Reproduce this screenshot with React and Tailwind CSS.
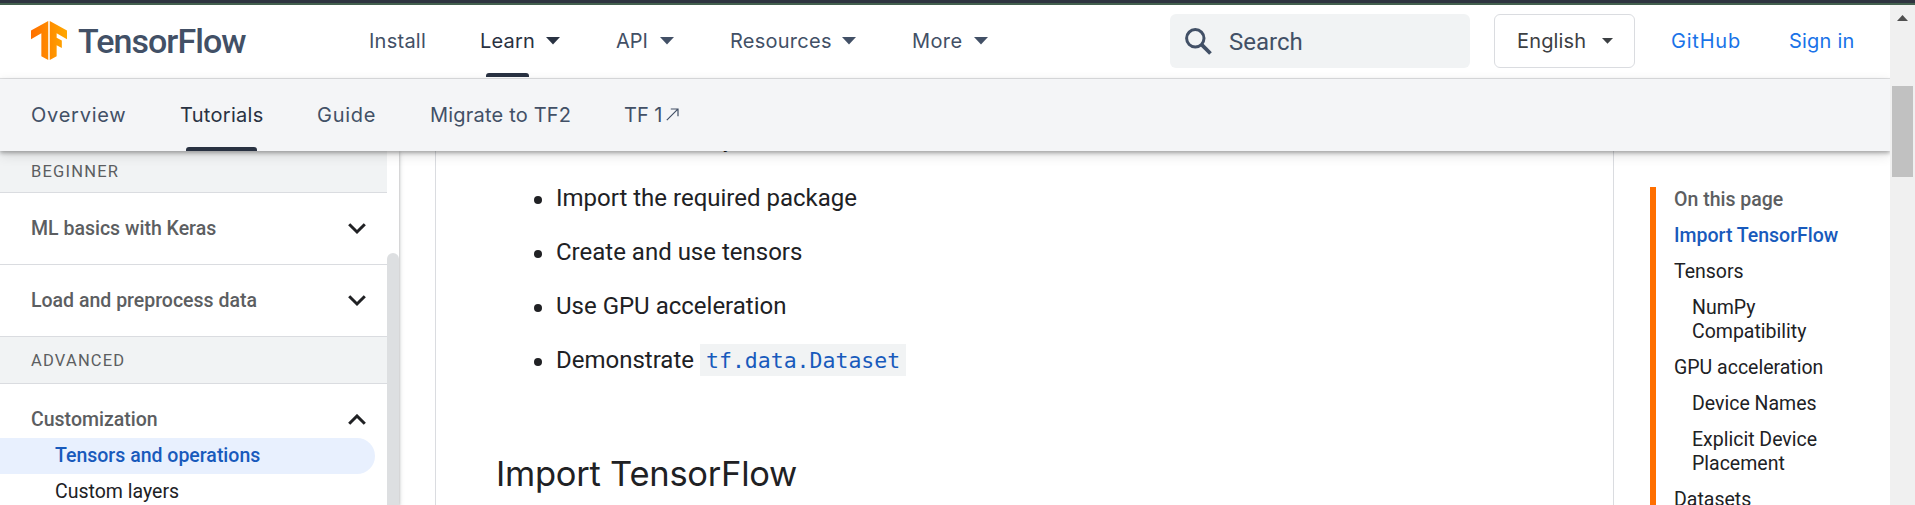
const gs = "font-['Inter',sans-serif]";

function Caret({ className = '' }) {
  return (
    <svg viewBox="0 0 14 8" className={`h-2 w-3.5 shrink-0 ${className}`} fill="currentColor">
      <path d="M0 0h14L7 7.5z" />
    </svg>
  );
}

function Chevron({ up }) {
  return (
    <svg viewBox="0 0 18 12" className="mr-[21px] h-3 w-[18px] shrink-0 text-[#202124]" fill="none" stroke="currentColor" strokeWidth="3">
      <path d={up ? 'M1.2 9.8 9 2l7.8 7.8' : 'M1.2 1.2 9 9l7.8-7.8'} />
    </svg>
  );
}

function Logo() {
  return (
    <div className="ml-[31px] flex w-[338px] shrink-0 items-center pb-1">
      <svg viewBox="1.28 0 21.44 24" preserveAspectRatio="none" className="mt-px h-[39px] w-9 shrink-0">
        <defs>
          <linearGradient id="tf" x1="0" x2="1" y1="0" y2="0">
            <stop offset="0" stopColor="#ff6f00" />
            <stop offset="1" stopColor="#ffa800" />
          </linearGradient>
        </defs>
        <path
          fill="url(#tf)"
          d="M1.292 5.856L11.54 0v24l-4.095-2.378V7.603l-6.168 3.564.015-5.31zm21.43 5.311l-.014-5.31L12.46 0v24l4.095-2.378V14.87l3.092 1.788-.018-4.618-3.074-1.756V7.603l6.168 3.564z"
        />
      </svg>
      <span className="ml-[11px] mt-[3px] font-['Roboto',sans-serif] text-[34px] font-medium leading-none tracking-[-0.95px] text-[#425066]">
        TensorFlow
      </span>
    </div>
  );
}

function TopBar() {
  return (
    <header className={`flex h-[74px] items-stretch border-b border-[#e3e4e6] bg-white text-[20px] text-[#425066] ${gs}`}>
      <Logo />
      <nav className="flex shrink-0">
        <a className="flex w-[111px] items-center pb-px tracking-[0.25px]">Install</a>
        <a className="relative flex w-[136px] items-center pb-px text-[#293242]">
          <span className="w-[66px] tracking-[0.2px]">Learn</span>
          <Caret />
          <span className="absolute bottom-px left-[6px] h-1 w-[43px] rounded-t-[3px] bg-[#293242]" />
        </a>
        <a className="flex w-[114px] items-center pb-px">
          <span className="w-[44px]">API</span>
          <Caret />
        </a>
        <a className="flex w-[182px] items-center pb-px">
          <span className="w-[112px] tracking-[0.25px]">Resources</span>
          <Caret />
        </a>
        <a className="flex w-[258px] items-center pb-px">
          <span className="w-[62px] tracking-[0.4px]">More</span>
          <Caret />
        </a>
      </nav>
      <div className="mt-[9px] flex h-[54px] w-[300px] shrink-0 items-center rounded-md bg-[#f1f3f4] font-['Roboto',sans-serif] text-[24px]">
        <svg viewBox="0 0 27 27" className="ml-[15px] h-[27px] w-[27px]" fill="none" stroke="currentColor">
          <circle cx="10.3" cy="10.3" r="8.7" strokeWidth="3" />
          <path d="M16.4 16.4 25.5 25.5" strokeWidth="3.8" />
        </svg>
        <span className="ml-[17px] pt-px">Search</span>
      </div>
      <div className="ml-6 mt-[9px] flex h-[54px] w-[141px] shrink-0 items-center rounded-md border border-[#dadce0] text-[#3c4043]">
        <span className="ml-[22px] w-[85px] pb-px tracking-[0.15px]">English</span>
        <svg viewBox="0 0 12 6" className="h-1.5 w-3" fill="currentColor"><path d="M0 0h11L5.5 5.8z" /></svg>
      </div>
      <a className="ml-[36px] flex w-[118px] shrink-0 items-center pb-px tracking-[0.8px] text-[#1a73e8]">GitHub</a>
      <a className="flex shrink-0 items-center pb-px tracking-[0.2px] text-[#1a73e8]">Sign in</a>
    </header>
  );
}

function TabBar() {
  return (
    <nav className={`relative z-10 flex h-[72px] bg-[#f4f5f7] pl-[31px] text-[20px] text-[#425066] shadow-[0_2px_4px_rgba(0,0,0,0.3),0_4px_12px_rgba(0,0,0,0.12)] ${gs}`}>
      <a className="flex w-[149px] items-center pb-px tracking-[0.75px]">Overview</a>
      <a className="relative flex w-[137px] items-center pb-px tracking-[0.3px] text-[#293242]">
        Tutorials
        <span className="absolute bottom-0 left-[6px] h-1 w-[71px] rounded-t-[3px] bg-[#293242]" />
      </a>
      <a className="flex w-[113px] items-center pb-px tracking-[0.75px]">Guide</a>
      <a className="flex w-[194px] items-center pb-px tracking-[0.2px]">Migrate to TF2</a>
      <a className="flex items-center pb-px">
        <span className="w-[42px]">TF 1</span>
        <svg viewBox="0 0 13 13" className="h-[13px] w-[13px]" fill="none" stroke="currentColor" strokeWidth="1.2">
          <path d="M.8 12.2 11.8 1.2M4.8 1h7.2v7.2" />
        </svg>
      </a>
    </nav>
  );
}

function Sidebar() {
  return (
    <aside className="flex h-full w-[399px] shrink-0 bg-white font-['Roboto',sans-serif] text-[19.5px] text-[#5c5e61] shadow-[0_1px_3px_rgba(60,64,67,0.4),0_2px_6px_rgba(60,64,67,0.15)]">
      <div className="w-[387px]">
        <div className="flex h-[42px] items-center border-b border-[#dadce0] bg-[#f1f3f4] pl-[31px] pt-px text-[16.5px] tracking-[1.2px]">BEGINNER</div>
        <div className="flex h-[72px] items-center justify-between border-b border-[#dadce0] pl-[31px] pt-px font-medium">
          ML basics with Keras
          <Chevron />
        </div>
        <div className="flex h-[72px] items-center justify-between border-b border-[#dadce0] pl-[31px] pt-px font-medium">
          Load and preprocess data
          <Chevron />
        </div>
        <div className="flex h-[47px] items-center border-b border-[#dadce0] bg-[#f1f3f4] pl-[31px] pt-0.5 text-[16.5px] tracking-[1.2px]">ADVANCED</div>
        <div className="mt-[18px] flex h-9 items-center justify-between pl-[31px] font-medium">
          Customization
          <Chevron up />
        </div>
        <div className="mr-3 flex h-9 items-center rounded-r-full bg-[#e8f0fe] pl-[55px] font-medium text-[#185abc]">Tensors and operations</div>
        <div className="flex h-9 items-center pl-[55px] text-[#202124]">Custom layers</div>
      </div>
      <div className="mt-[102px] w-3 rounded-t-full bg-[#dddfe1]" />
    </aside>
  );
}

function Article() {
  const row = 'relative flex h-[54px] items-center';
  const dot = 'mr-[14px] mt-[3px] h-2 w-2 rounded-full bg-[#202124]';
  return (
    <main className="ml-9 w-[1179px] shrink-0 border-x border-[#dadce0] bg-white font-['Roboto',sans-serif] text-[24px] text-[#202124]">
      <p className="-mt-[30px] ml-[61px] h-[50px] leading-9">This is an introductory TensorFlow tutorial that shows how to:</p>
      <ul className="pl-[98px]">
        <li className={row}><span className={dot} />Import the required package</li>
        <li className={row}><span className={dot} />Create and use tensors</li>
        <li className={row}><span className={dot} />Use GPU acceleration</li>
        <li className={row}>
          <span className={dot} />Demonstrate
          <code className="ml-[6px] flex h-8 w-[206px] items-center bg-[#f1f3f4] pl-1.5 pt-0.5 font-['DejaVu_Sans_Mono',monospace] text-[21.5px] text-[#185abc]">tf.data.Dataset</code>
        </li>
      </ul>
      <h2 className={`ml-[60px] mt-[63px] whitespace-nowrap text-[34.5px] leading-[48px] tracking-[-0.25px] ${gs}`}>Import TensorFlow</h2>
    </main>
  );
}

function Toc() {
  return (
    <aside className="ml-9 mt-9 w-[240px] shrink-0 border-l-[6px] border-[#ff6f00] pl-[18px] pt-px font-['Roboto',sans-serif] text-[19.5px] leading-6 text-[#202124]">
      <ul className="flex flex-col gap-3">
        <li className="font-medium text-[#5c5e61]">On this page</li>
        <li className="font-medium text-[#185abc]">Import TensorFlow</li>
        <li>Tensors</li>
        <li className="pl-[18px]">NumPy<br />Compatibility</li>
        <li>GPU acceleration</li>
        <li className="pl-[18px]">Device Names</li>
        <li className="pl-[18px]">Explicit Device<br />Placement</li>
        <li>Datasets</li>
      </ul>
    </aside>
  );
}

export default function App() {
  return (
    <div className="flex h-[505px] w-[1915px] flex-col overflow-hidden bg-white">
      <div className="h-[5px] shrink-0 border-b-2 border-[#43604f] bg-[#2e3440]" />
      <div className="flex h-[500px]">
        <div className="flex h-full w-[1890px] flex-col overflow-hidden">
          <div className="shrink-0"><TopBar /></div>
          <div className="z-10 shrink-0"><TabBar /></div>
          <div className="flex h-[354px] overflow-hidden">
            <Sidebar />
            <Article />
            <Toc />
          </div>
        </div>
        <div className="flex w-[25px] flex-col items-center bg-[#f0f0f0]">
          <svg viewBox="0 0 11 6" className="mt-[10px] h-1.5 w-[11px]" fill="#505050"><path d="M0 6 5.5 0 11 6z" /></svg>
          <div className="mt-[65px] h-[91px] w-[21px] bg-[#c1c1c1]" />
        </div>
      </div>
    </div>
  );
}
